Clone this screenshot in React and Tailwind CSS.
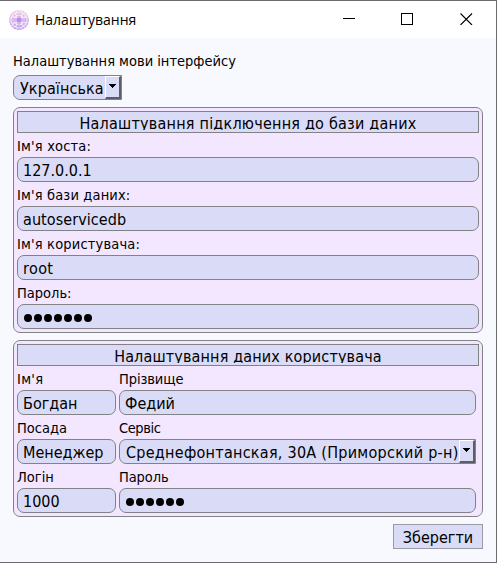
const uiFont = "font-['DejaVu_Sans_Condensed','DejaVu_Sans',sans-serif] [font-stretch:condensed]";

function Label({ children, className = "leading-[26px]" }) {
  return (
    <div className={`h-6 text-[14.5px] whitespace-nowrap ${className}`}>
      <span>{children}</span>
    </div>
  );
}

function Field({ children, className = "" }) {
  return (
    <div className={`h-[25px] rounded-[7px] border border-[#828286] bg-[#dadcf7] pl-[5px] text-[16px] leading-[25px] whitespace-nowrap ${className}`}>
      {children}
    </div>
  );
}

function Dots({ count }) {
  return (
    <div className="flex h-full items-center gap-[2px] pl-px pt-[3px]">
      {Array.from({ length: count }, (_, i) => (
        <span key={i} className="size-2 rounded-full bg-black" />
      ))}
    </div>
  );
}

function Combo({ children, className = "" }) {
  return (
    <div className={`flex h-[25px] rounded-l-[7px] border border-[#828286] bg-[#dadcf7] pl-[6px] text-[16px] ${className}`}>
      <span className="min-w-0 flex-1 leading-[25px] whitespace-nowrap">{children}</span>
      <span className="flex h-[23px] w-4 shrink-0 justify-center border-t border-r-2 border-b-2 border-l border-t-white border-r-[#5c5d66] border-b-[#5c5d66] border-l-white pt-[7px]">
        <svg width="7" height="4" viewBox="0 0 7 4" shapeRendering="crispEdges">
          <path d="M0 0h7v1H6v1H5v1H4v1H3V3H2V2H1V1H0z" />
        </svg>
      </span>
    </div>
  );
}

function Heading({ children, className = "" }) {
  return (
    <div className="h-[22px] border border-[#828286] bg-[#dadcf7] pt-px text-center text-[16px]">
      <div className={`h-[17px] overflow-hidden leading-[22px] whitespace-nowrap ${className}`}>{children}</div>
    </div>
  );
}

function Logo() {
  return (
    <svg className="ml-[9px] size-5" viewBox="0 0 20 20" fill="none">
      <defs>
        <linearGradient id="logo" gradientUnits="userSpaceOnUse" x1="0" y1="0" x2="0" y2="20">
          <stop offset="0" stopColor="#efc8dc" />
          <stop offset="1" stopColor="#b896f0" />
        </linearGradient>
      </defs>
      <circle cx="10" cy="10" r="9.5" fill="url(#logo)" opacity=".3" />
      <g stroke="url(#logo)">
        <circle cx="10" cy="10" r="9.2" strokeWidth="1.3" strokeDasharray="2.4 .5" />
        <circle cx="10" cy="10" r="6.3" strokeWidth="1.8" strokeDasharray="2 1.3" />
        <path d="M10 2v16M2 10h16" strokeWidth="1" />
      </g>
      <path d="M5 8h3V6h4v2h3v4h-3v2H8v-2H5z" fill="#d5b0ec" opacity=".8" />
      <rect x="8" y="8" width="4" height="4" fill="#bd8ee8" />
    </svg>
  );
}

export default function App() {
  return (
    <div className={`flex h-[563px] w-[497px] flex-col overflow-hidden border-t border-r border-b border-[#6b6b6e] bg-[#f8f9ff] text-black ${uiFont}`}>
      <header className="flex h-[37px] items-center bg-white">
        <Logo />
        <h1 className="ml-[6px] flex-1 font-['Open_Sans',sans-serif] text-[14px] leading-[20px] [font-stretch:normal]">
          <span>Налаштування</span>
        </h1>
        <svg className="mr-[23px] mb-[2px]" width="130" height="13" viewBox="0 0 130 13" fill="none" stroke="#000">
          <path d="M0 6.5h12M58.5 1.5h11v11h-11z" shapeRendering="crispEdges" />
          <path d="M117.5 1.5l11.5 11.5M129 1.5l-11.5 11.5" strokeWidth="1.1" />
        </svg>
      </header>
      <main className="flex flex-col pt-[11px] pr-[13px] pl-[13px]">
        <Label className="mb-[2px] leading-[24px]">Налаштування мови інтерфейсу</Label>
        <Combo className="w-[109px] tracking-[0.1px]">Українська</Combo>
        <section className="mt-[7px] h-[226px] rounded-[7px] border border-[#828286] bg-[#f3e6ff] p-[3px]">
          <Heading className="tracking-[0.22px]">Налаштування підключення до бази даних</Heading>
          <Label className="leading-[26px] tracking-[0.18px]">Ім'я хоста:</Label>
          <Field>127.0.0.1</Field>
          <Label className="leading-[26px] tracking-[0.15px]">Ім'я бази даних:</Label>
          <Field className="tracking-[0.07px]">autoservicedb</Field>
          <Label className="leading-[26px] tracking-[0.17px]">Ім'я користувача:</Label>
          <Field className="tracking-[0.4px]">root</Field>
          <Label>Пароль:</Label>
          <Field><Dots count={7} /></Field>
        </section>
        <section className="mt-[7px] h-[177px] rounded-[7px] border border-[#828286] bg-[#f3e6ff] p-[3px]">
          <Heading className="tracking-[0.15px]">Налаштування даних користувача</Heading>
          <div className="grid grid-cols-[99px_357px] gap-x-[3px]">
            <Label className="leading-[26px] tracking-[0.3px]">Ім'я</Label>
            <Label className="leading-[26px] tracking-[-0.1px]">Прізвище</Label>
            <Field>Богдан</Field>
            <Field>Федий</Field>
            <Label>Посада</Label>
            <Label className="leading-[26px] tracking-[-0.4px]">Сервіс</Label>
            <Field>Менеджер</Field>
            <Combo className="tracking-[0.27px]">Среднефонтанская, 30А (Приморский р-н)</Combo>
            <Label>Логін</Label>
            <Label className="leading-[26px] tracking-[-0.1px]">Пароль</Label>
            <Field>1000</Field>
            <Field><Dots count={6} /></Field>
          </div>
        </section>
        <button className="mt-[7px] h-[25px] w-[90px] self-end border border-[#9a9aa6] bg-[#dadcf7] text-[16px] leading-[25px]">Зберегти</button>
      </main>
    </div>
  );
}
